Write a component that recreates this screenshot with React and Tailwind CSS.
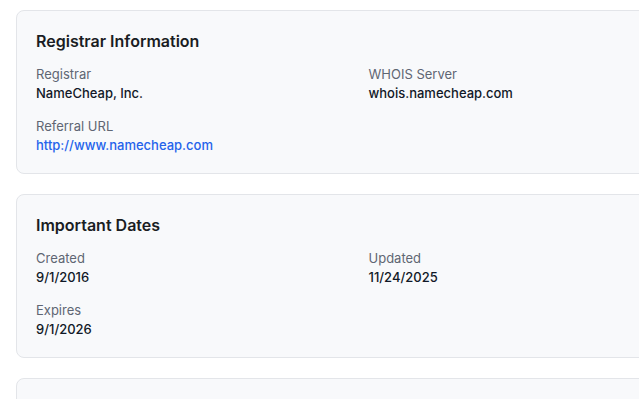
import React from 'react';

const sections = [
  {
    title: 'Registrar Information',
    fields: [
      { label: 'Registrar', value: 'NameCheap, Inc.' },
      { label: 'WHOIS Server', value: 'whois.namecheap.com' },
      { label: 'Referral URL', value: 'http://www.namecheap.com', link: true },
    ],
  },
  {
    title: 'Important Dates',
    fields: [
      { label: 'Created', value: '9/1/2016' },
      { label: 'Updated', value: '11/24/2025' },
      { label: 'Expires', value: '9/1/2026' },
    ],
  },
];

const Field = ({ label, value, link }) => (
  <div>
    <div className="text-[13px] leading-[18px] text-[#5f6673]">{label}</div>
    {link ? (
      <a href="#" className="block text-[13px] leading-5 font-medium text-[#2563eb]">
        {value}
      </a>
    ) : (
      <div className="text-[13px] leading-5 font-medium text-[#111827]">{value}</div>
    )}
  </div>
);

const App = () => {
  return (
    <div className="w-full h-[399px] overflow-hidden bg-white" style={{ fontFamily: 'Inter, "Noto Sans", sans-serif' }}>
      <div className="w-[706px] pl-4 pt-2.5 flex flex-col gap-5">
        {sections.map((s) => (
          <div key={s.title} className="bg-[#f8f9fb] border border-[#e3e5e9] rounded-lg py-5 pl-[19px] pr-5 h-[164px]">
            <h2 className="text-base leading-5 font-semibold text-[#1a1d23] mb-[14px]">{s.title}</h2>
            <div className="grid grid-cols-2 gap-x-4 gap-y-[14px]">
              {s.fields.map((f) => (
                <Field key={f.label} {...f} />
              ))}
            </div>
          </div>
        ))}
        <div className="bg-[#f8f9fb] border border-[#e3e5e9] rounded-lg h-[164px]"></div>
      </div>
    </div>
  );
};

export default App;
